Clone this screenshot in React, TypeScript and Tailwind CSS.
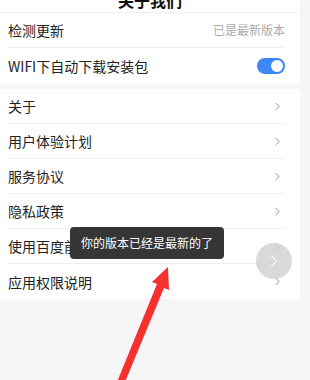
import { ChevronRight } from 'lucide-react';

const font = { fontFamily: '"Noto Sans CJK SC", "Noto Sans", sans-serif' };

function Row({ label, right, last }: { label: string; right?: React.ReactNode; last?: boolean }) {
  return (
    <div className="pl-2 pr-[15px]">
      <div className={`flex h-[35px] items-center justify-between ${last ? '' : 'border-b border-[#f0f0f0]'}`}>
        <span className="pt-[1px] text-[14px] text-[#222]">{label}</span>
        {right ?? <ChevronRight size={13} strokeWidth={1.5} className="mr-[1px] text-[#777]" />}
      </div>
    </div>
  );
}

function Toggle() {
  return (
    <div className="flex h-[16px] w-[28px] items-center justify-end rounded-full bg-[#3d86f5] px-[2px]">
      <div className="h-[12px] w-[12px] rounded-full bg-white" />
    </div>
  );
}

export default function App() {
  return (
    <div className="relative h-[380px] w-[310px] overflow-hidden bg-[#f6f6f6]" style={font}>
      <div className="w-[300px]">
        <div className="bg-white">
          <div className="-mt-[13px] flex h-[26px] items-center justify-center border-b border-[#f0f0f0] text-[16px] font-bold text-[#111]">
            关于我们
          </div>
          <Row label="检测更新" right={<span className="text-[12px] text-[#aaa]">已是最新版本</span>} />
          <Row label="WIFI下自动下载安装包" right={<Toggle />} last />
        </div>
        <div className="mt-[6px] bg-white">
          <Row label="关于" />
          <Row label="用户体验计划" />
          <Row label="服务协议" />
          <Row label="隐私政策" />
          <Row label="使用百度前必读" />
          <Row label="应用权限说明" last />
        </div>
      </div>

      <div className="absolute left-[256px] top-[243px] flex h-[36px] w-[36px] items-center justify-center rounded-full bg-[#cfcfcf]/80">
        <ChevronRight size={20} strokeWidth={1.5} className="text-white/70" />
      </div>

      <div className="absolute left-[70px] top-[227px] flex h-[32px] w-[154px] items-center justify-center rounded-[4px] bg-[#363636] text-[12px] text-white">
        你的版本已经是最新的了
      </div>

      <svg className="absolute left-0 top-0" width="310" height="380" viewBox="0 0 310 380">
        <polygon points="168,267 169,290 164,288 125,382 117,382 157,284 152,282" fill="#f5302e" />
      </svg>
    </div>
  );
}
